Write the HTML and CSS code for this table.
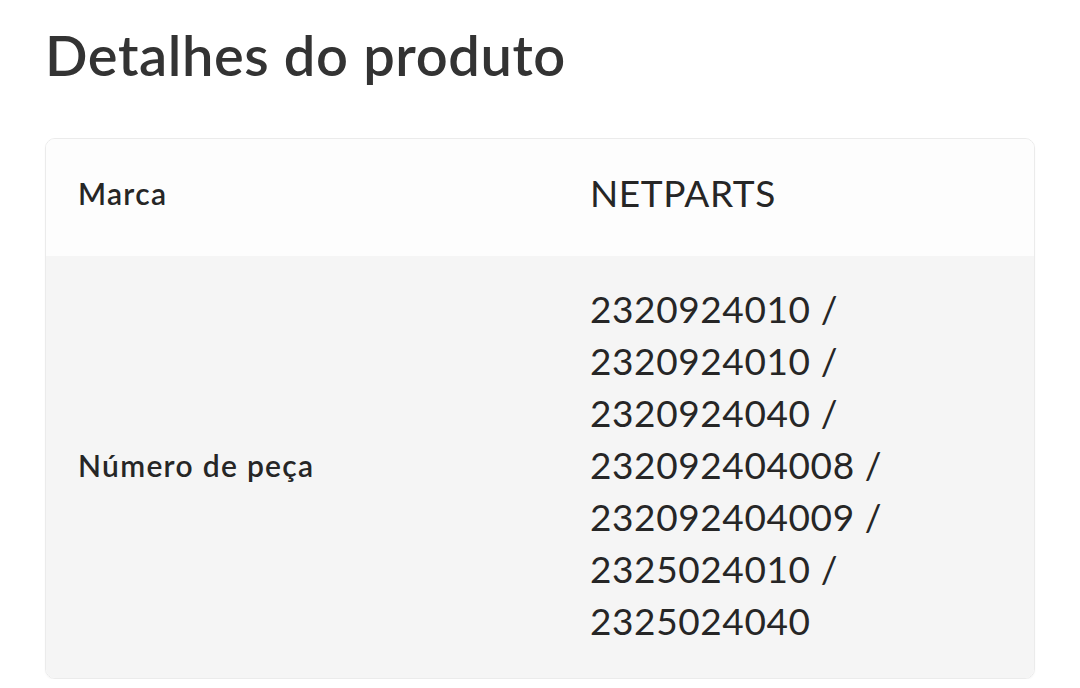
FILE: index.html
```html
<!DOCTYPE html>
<html lang="pt">
<head>
<meta charset="utf-8">
<link rel="stylesheet" href="styles.css">
</head>
<body>
<main class="page">
  <h1 class="title">Detalhes do produto</h1>
  <section class="card">
    <div class="row row-white">
      <div class="label">Marca</div>
      <div class="value">NETPARTS</div>
    </div>
    <div class="row row-grey">
      <div class="label">Número de peça</div>
      <div class="value">2320924010 /<br>2320924010 /<br>2320924040 /<br>232092404008 /<br>232092404009 /<br>2325024010 /<br>2325024040</div>
    </div>
  </section>
</main>
</body>
</html>
```

FILE: styles.css
```css
html, body {
  margin: 0;
  padding: 0;
  background: #ffffff;
}
body {
  font-family: "Lato", "Noto Sans", sans-serif;
  color: #2b2b2b;
}
.page {
  padding: 20px 45px 0 45px;
}
.title {
  margin: 0;
  font-size: 56px;
  line-height: 70px;
  font-weight: 600;
  color: #333333;
  letter-spacing: 0.6px;
}
.card {
  margin-top: 48px;
  border: 1px solid #ebebeb;
  border-radius: 10px;
  overflow: hidden;
  box-shadow: 0 1px 2px rgba(0,0,0,0.04);
}
.row {
  display: grid;
  grid-template-columns: 512px 1fr;
  align-items: center;
}
.row-white {
  box-sizing: border-box;
  background: #fdfdfd;
  height: 117px;
  padding-bottom: 10px;
}
.row-grey {
  background: #f5f5f5;
  padding: 27px 0 31px 0;
}
.label {
  padding-left: 32px;
  font-size: 30px;
  font-weight: 600;
  letter-spacing: 1.3px;
  color: #262626;
}
.value {
  padding-left: 32px;
  font-size: 37px;
  line-height: 52px;
  font-weight: 400;
  letter-spacing: 0.6px;
  color: #262626;
}
```
